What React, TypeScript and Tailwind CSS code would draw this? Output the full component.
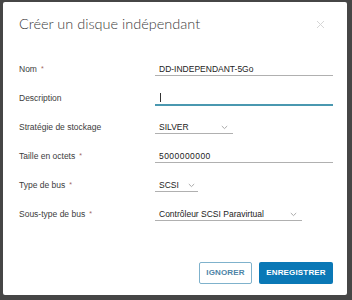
import React from "react";

const Chevron = () => (
  <svg width="7" height="5" viewBox="0 0 7 5" className="shrink-0">
    <polyline points="0.8,1 3.5,3.6 6.2,1" fill="none" stroke="#a0a0a0" strokeWidth="0.9" />
  </svg>
);

const Label = ({ text, req }: { text: string; req?: boolean }) => (
  <div className="w-[136px] shrink-0 flex items-center text-[8.5px] text-[#3c3c3c]">
    <span>{text}</span>
    {req && <span className="ml-[4px] text-[7px] text-[#a0665e]">*</span>}
  </div>
);

export default function App() {
  const font = { fontFamily: '"Liberation Sans", Arial, sans-serif' };
  return (
    <div className="w-[352px] h-[300px] bg-[#464646] pt-[2px] pl-[3px] pr-[5px] pb-[5px]" style={font}>
      <div className="bg-white h-full flex flex-col rounded-[2px] pl-[16px] pr-[14px]">
        <div className="flex items-start justify-between pt-[12px]">
          <div className="text-[14.5px] leading-[20px] text-[#3a3a3a]" style={{ fontFamily: "Lato, sans-serif", fontWeight: 300 }}>
            Créer un disque indépendant
          </div>
          <svg width="9" height="9" viewBox="0 0 9 9" className="mt-[6px] mr-[8px]">
            <path d="M1 1 L8 8 M8 1 L1 8" stroke="#d6d6d6" strokeWidth="1" />
          </svg>
        </div>

        <div className="mt-[21px] flex flex-col">
          <div className="h-[29px] flex items-center">
            <Label text="Nom" req />
            <div className="w-[178px] h-[13px] flex items-center border-b border-[#b0b0b0] pl-[4px] text-[8.5px] text-[#222]">
              DD-INDEPENDANT-5Go
            </div>
          </div>
          <div className="h-[29px] flex items-center">
            <Label text="Description" />
            <div className="w-[178px] h-[14px] flex items-end border-b-2 border-[#4a98b0] pl-[5px] pb-[2px]">
              <div className="w-[1px] h-[9px] bg-[#333]" />
            </div>
          </div>
          <div className="h-[29px] flex items-center">
            <Label text="Stratégie de stockage" />
            <div className="w-[78px] h-[13px] flex items-center justify-between border-b border-[#b0b0b0] pl-[4px] pr-[5px] text-[8.5px] text-[#222]">
              <span>SILVER</span>
              <Chevron />
            </div>
          </div>
          <div className="h-[29px] flex items-center">
            <Label text="Taille en octets" req />
            <div className="w-[178px] h-[13px] flex items-center border-b border-[#b0b0b0] pl-[4px] text-[8.5px] text-[#222] tracking-[0.45px]">
              5000000000
            </div>
          </div>
          <div className="h-[29px] flex items-center">
            <Label text="Type de bus" req />
            <div className="w-[43px] h-[13px] flex items-center justify-between border-b border-[#b0b0b0] pl-[4px] pr-[3px] text-[8.5px] text-[#222]">
              <span>SCSI</span>
              <Chevron />
            </div>
          </div>
          <div className="h-[29px] flex items-center">
            <Label text="Sous-type de bus" req />
            <div className="w-[147px] h-[13px] flex items-center justify-between border-b border-[#b0b0b0] pl-[4px] pr-[5px] text-[8.5px] text-[#222]">
              <span>Contrôleur SCSI Paravirtual</span>
              <Chevron />
            </div>
          </div>
        </div>

        <div className="mt-[33px] flex justify-end gap-[7px]">
          <div className="w-[53px] h-[22px] flex items-center justify-center border border-[#7fb2cc] rounded-[2px] text-[8px] font-bold tracking-[0.15px] text-[#4d84a6]">
            IGNORER
          </div>
          <div className="w-[74px] h-[22px] flex items-center justify-center bg-[#0a78b6] rounded-[2px] text-[8px] font-bold tracking-[0.15px] text-white">
            ENREGISTRER
          </div>
        </div>
      </div>
    </div>
  );
}
